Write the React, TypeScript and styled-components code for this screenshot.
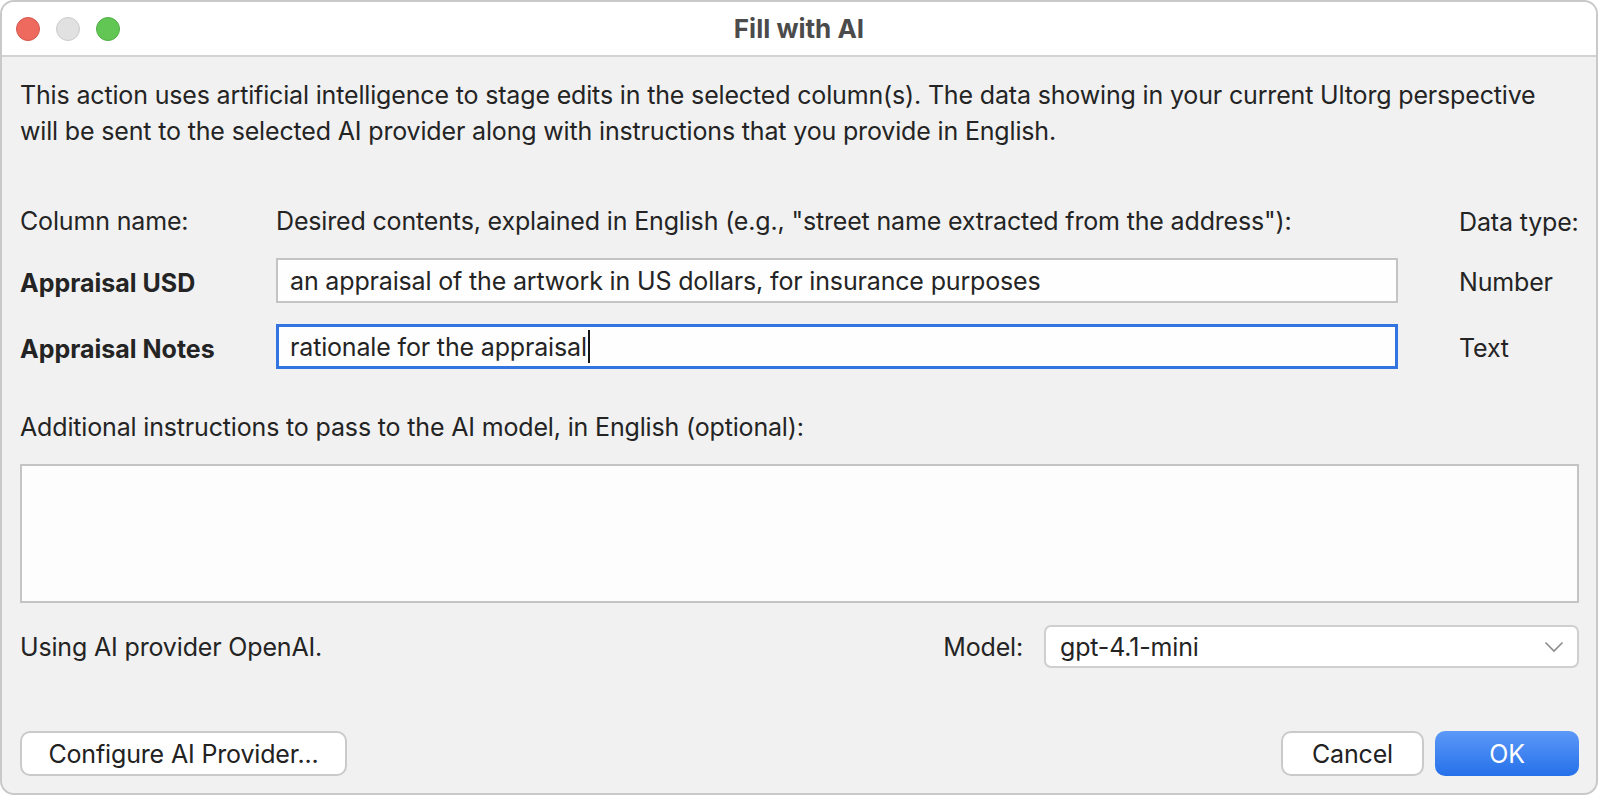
import React from 'react';
import styled, { createGlobalStyle } from 'styled-components';

const GlobalStyle = createGlobalStyle`
  html, body {
    margin: 0;
    padding: 0;
    background: #ffffff;
  }

  body {
    font-family: Inter, "Liberation Sans", Arial, sans-serif;
    -webkit-font-smoothing: antialiased;
  }
`;

type Field = {
  name: string;
  contents: string;
  dataType: string;
  focused?: boolean;
};

const fields: Field[] = [
  {
    name: 'Appraisal USD',
    contents: 'an appraisal of the artwork in US dollars, for insurance purposes',
    dataType: 'Number',
  },
  {
    name: 'Appraisal Notes',
    contents: 'rationale for the appraisal',
    dataType: 'Text',
    focused: true,
  },
];

const lights = [
  { fill: '#ee6a5f', edge: '#d4584d' },
  { fill: '#e1e1e1', edge: '#cbcbcb' },
  { fill: '#62c655', edge: '#52ad47' },
];

export default function App() {
  return (
    <>
      <GlobalStyle />
      <Window>
        <TitleBar>
          <Lights>
            {lights.map((l, i) => (
              <Light key={i} $fill={l.fill} $edge={l.edge} />
            ))}
          </Lights>
          <Title>Fill with AI</Title>
          <div />
        </TitleBar>

        <Content>
          <Intro>
            This action uses artificial intelligence to stage edits in the selected column(s). The data showing in your current Ultorg perspective
            <br />
            will be sent to the selected AI provider along with instructions that you provide in English.
          </Intro>

          <FieldGrid>
            <HeaderCell>Column name:</HeaderCell>
            <HeaderCell>
              Desired contents, explained in English (e.g., "street name extracted from the address"):
            </HeaderCell>
            <TypeCell>Data type:</TypeCell>

            {fields.map((f) => (
              <React.Fragment key={f.name}>
                <ColumnName>{f.name}</ColumnName>
                <TextField $focused={!!f.focused}>
                  {f.contents}
                  {f.focused && <Caret />}
                </TextField>
                <TypeCell>{f.dataType}</TypeCell>
              </React.Fragment>
            ))}
          </FieldGrid>

          <SectionLabel>Additional instructions to pass to the AI model, in English (optional):</SectionLabel>
          <TextArea />

          <ProviderRow>
            <Label>Using AI provider OpenAI.</Label>
            <ModelPicker>
              <Label>Model:</Label>
              <Combo>
                gpt-4.1-mini
                <svg width="20" height="12" viewBox="0 0 20 12">
                  <polyline
                    points="1.5,1.5 10,10 18.5,1.5"
                    fill="none"
                    stroke="#8c8c8c"
                    strokeWidth="1.6"
                  />
                </svg>
              </Combo>
            </ModelPicker>
          </ProviderRow>

          <ButtonRow>
            <Button $width={327}>Configure AI Provider...</Button>
            <ButtonGroup>
              <Button $width={143}>Cancel</Button>
              <Button $width={144} $primary>
                OK
              </Button>
            </ButtonGroup>
          </ButtonRow>
        </Content>
      </Window>
    </>
  );
}

const Window = styled.div`
  box-sizing: border-box;
  width: 1598px;
  height: 795px;
  border: 2px solid #c9c9c9;
  border-radius: 14px;
  overflow: hidden;
  background: #f1f1f1;
  display: flex;
  flex-direction: column;
  color: #242424;
`;

const TitleBar = styled.div`
  height: 53px;
  flex: none;
  background: #ffffff;
  border-bottom: 2px solid #d3d3d3;
  display: grid;
  grid-template-columns: 1fr auto 1fr;
  align-items: center;
`;

const Lights = styled.div`
  display: flex;
  gap: 16px;
  padding-left: 14px;
`;

const Light = styled.span<{ $fill: string; $edge: string }>`
  box-sizing: border-box;
  width: 24px;
  height: 24px;
  border-radius: 50%;
  background: ${(p) => p.$fill};
  border: 1px solid ${(p) => p.$edge};
`;

const Title = styled.div`
  font-size: 26px;
  font-weight: bold;
  color: #4b4b4b;
`;

const Content = styled.div`
  flex: 1;
  display: flex;
  flex-direction: column;
  padding: 20px 17px 17px 18px;
  font-size: 25px;
  line-height: 36px;
  letter-spacing: -0.16px;
`;

const Intro = styled.p`
  margin: 0;
  white-space: nowrap;
`;

const FieldGrid = styled.div`
  margin-top: 55px;
  display: grid;
  grid-template-columns: 256px 1fr 181px;
  grid-template-rows: 33px 45px 45px;
  row-gap: 21px;
  align-items: center;
`;

const HeaderCell = styled.div`
  white-space: nowrap;
`;

const TypeCell = styled.div`
  padding-left: 61px;
  white-space: nowrap;
  position: relative;
  top: 1px;
`;

const ColumnName = styled.div`
  font-weight: bold;
  letter-spacing: 0;
  position: relative;
  top: 2px;
`;

const TextField = styled.div<{ $focused: boolean }>`
  box-sizing: border-box;
  height: 45px;
  display: flex;
  align-items: center;
  background: #fefefe;
  border: ${(p) => (p.$focused ? '3px solid #3375e0' : '2px solid #c4c4c4')};
  padding-left: ${(p) => (p.$focused ? '11px' : '12px')};
  white-space: nowrap;
`;

const Caret = styled.span`
  width: 2px;
  height: 33px;
  margin-left: 1px;
  background: #151515;
`;

const SectionLabel = styled.div`
  margin-top: 40px;
`;

const TextArea = styled.div`
  box-sizing: border-box;
  margin-top: 19px;
  height: 139px;
  background: #fdfdfd;
  border: 2px solid #c4c4c4;
`;

const ProviderRow = styled.div`
  margin-top: 22px;
  height: 43px;
  display: flex;
  align-items: center;
  justify-content: space-between;
`;

const Label = styled.span`
  white-space: nowrap;
`;

const ModelPicker = styled.div`
  display: flex;
  align-items: center;
  gap: 21px;
`;

const Combo = styled.div`
  box-sizing: border-box;
  width: 535px;
  height: 43px;
  display: flex;
  align-items: center;
  justify-content: space-between;
  padding: 0 13px 0 14px;
  background: #ffffff;
  border: 2px solid #cfcfcf;
  border-radius: 7px;
`;

const ButtonRow = styled.div`
  margin-top: auto;
  display: flex;
  justify-content: space-between;
  align-items: center;
`;

const ButtonGroup = styled.div`
  display: flex;
  gap: 11px;
`;

const Button = styled.button<{ $width: number; $primary?: boolean }>`
  box-sizing: border-box;
  width: ${(p) => p.$width}px;
  height: 45px;
  padding: 0;
  font-family: inherit;
  font-size: 25px;
  letter-spacing: -0.16px;
  border-radius: 10px;
  color: ${(p) => (p.$primary ? '#ffffff' : '#222222')};
  border: ${(p) => (p.$primary ? 'none' : '2px solid #cacaca')};
  background: ${(p) =>
    p.$primary ? 'linear-gradient(#5c99f7, #2570ea)' : '#ffffff'};
`;
